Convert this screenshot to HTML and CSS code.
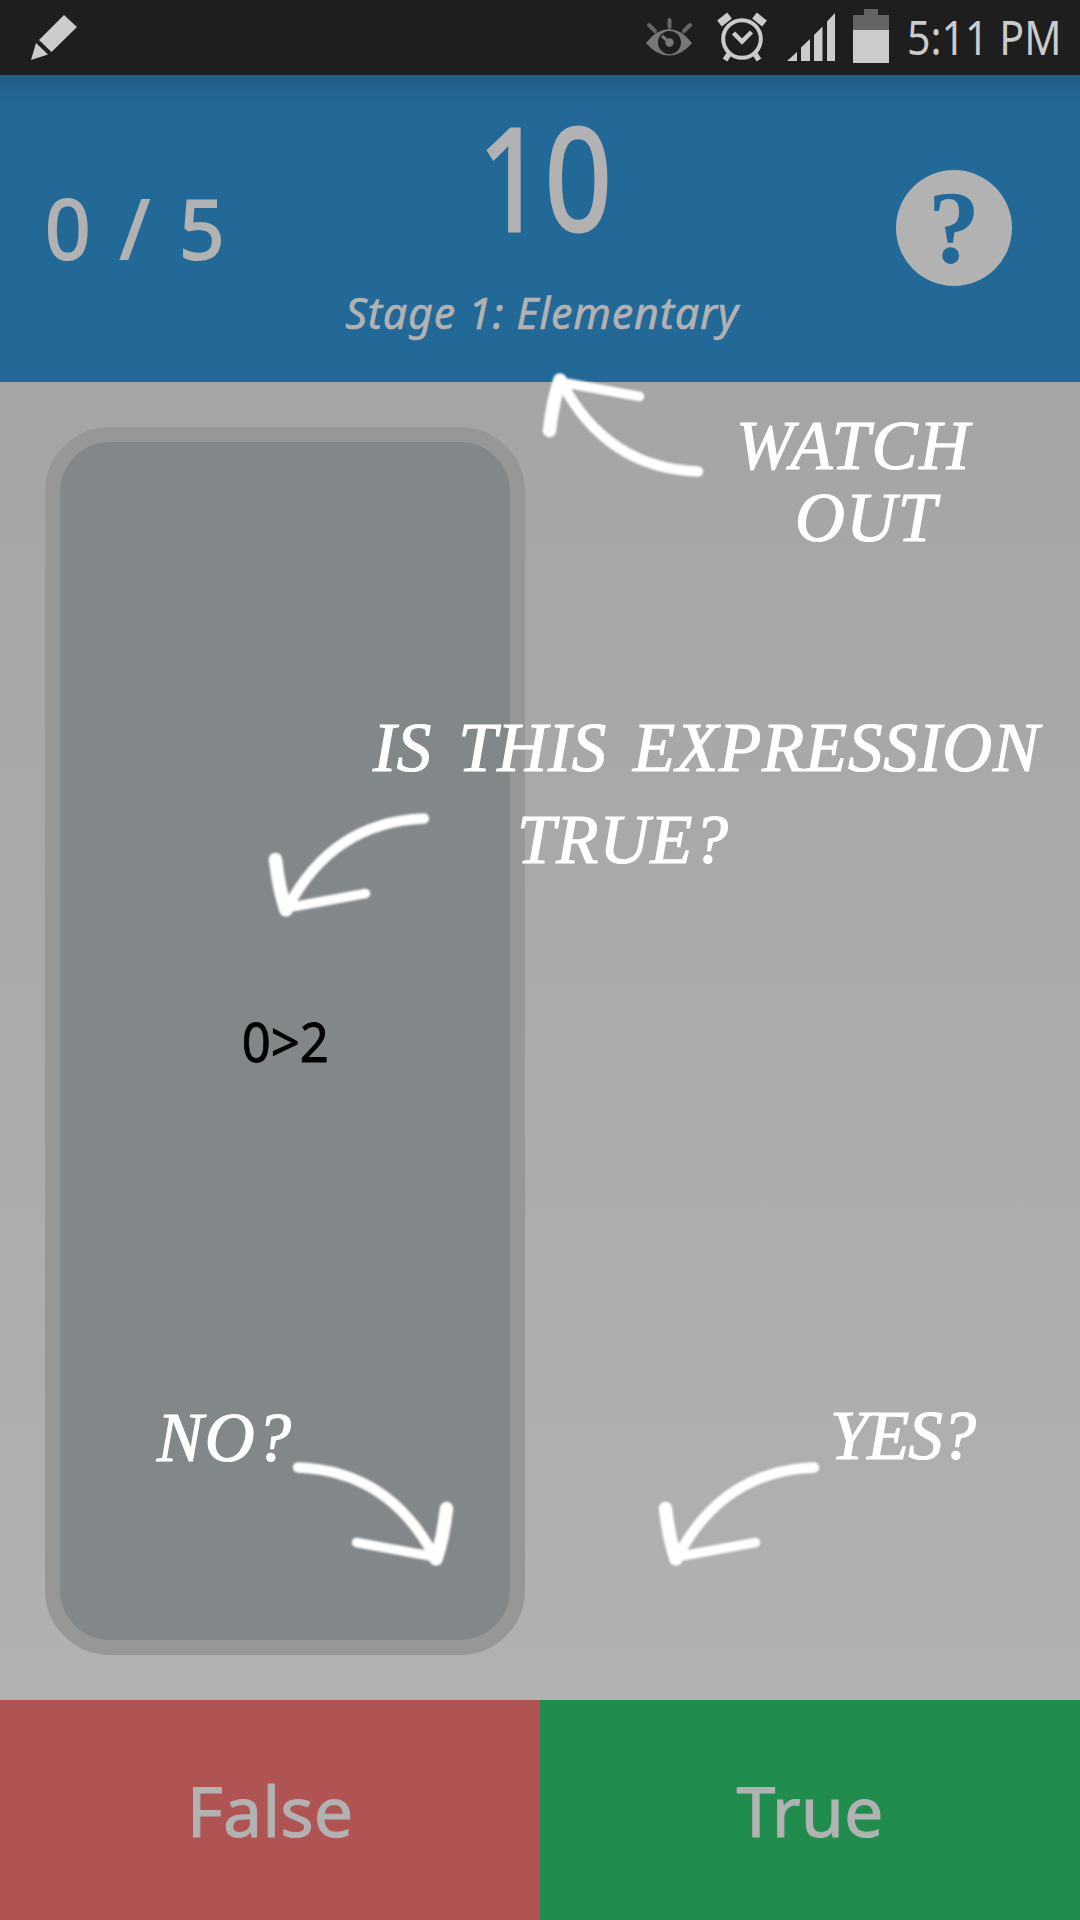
FILE: index.html
```html
<!DOCTYPE html>
<html lang="en">
<head>
<meta charset="utf-8">
<title>Stage 1: Elementary</title>
<link rel="stylesheet" href="styles.css">
</head>
<body>
<div class="screen">
  <div class="status">
    <svg class="pencil" width="48" height="48" viewBox="30 14 48 48"><path d="M64 15 77 27 51.5 52 39 40ZM36 43 48 54.5 31 60Z"/></svg>
    <div class="tray">
      <svg width="48" height="40" viewBox="645 18 48 40" class="eye">
        <path d="M646 43Q657 29 669 29T692 43Q682 55.500 669 55.500T646 43Z" fill="#777"/>
        <circle cx="669.500" cy="42.500" r="11.500" fill="#1e1e1e"/>
        <circle cx="669.500" cy="42.500" r="4.200" fill="#777"/>
        <path d="M669 42 662 36" stroke="#777" stroke-width="3"/>
        <path d="M669.500 20v7M649 25l6 6M690 25l-6 6" stroke="#666" stroke-width="4" stroke-linecap="round"/>
      </svg>
      <svg class="alarm" width="50" height="50" viewBox="717 12 50 50">
        <g fill="none" stroke="#cbcbcb">
          <circle cx="742" cy="39" r="18.800" stroke-width="4"/>
          <path d="M733.500 33l8.500 8.500 9.500-9.500" stroke-width="4.500"/>
          <path d="M719.500 23.500 729.500 15.500M764.500 23.500 754.500 15.500" stroke-width="7.500"/>
          <path d="M729 54l-4 6M755 54l4 6" stroke-width="5.500"/>
        </g>
      </svg>
      <svg class="signal" width="48" height="48" viewBox="787 13 48 48"><path fill="#cbcbcb" d="M787 61 797 52V61ZM801 61V47.500L810 39V61ZM814 61V35L822.500 26.500V61ZM827 61V21.500L835 13V61Z"/></svg>
      <svg class="battery" width="36" height="54" viewBox="0 0 36 54"><path fill="#646464" d="M11 0H25V6H36V21H0V6H11Z"/><path fill="#cbcbcb" d="M0 21H36V54H0Z"/></svg>
      <span class="clock">5:11 PM</span>
    </div>
  </div>
  <header class="header">
    <div class="score">0 / 5</div>
    <div class="middle">
      <div class="timer">10</div>
      <div class="stage">Stage 1: Elementary</div>
    </div>
    <div class="help"><span>?</span></div>
  </header>
  <main class="play">
    <div class="card"><span>0&gt;2</span></div>
  </main>
  <footer class="answers">
    <div class="answer false"><span>False</span></div>
    <div class="answer true"><span>True</span></div>
  </footer>
  <svg class="tutorial" width="1080" height="1920" viewBox="0 0 1080 1920">
    <defs>
      <g id="arrow" fill="none" stroke="#fff" stroke-linecap="round" stroke-linejoin="round">
        <path stroke-width="10.500" d="M288 907Q333 822 424 818.500"/>
        <path stroke-width="9.500" d="M286 908 365.500 893.500"/>
        <path stroke-width="13.500" d="M275.500 859.500Q279 890 286 910"/>
      </g>
    </defs>
    <g class="arrows">
      <use href="#arrow" transform="matrix(1 0 0 -1 274 1290)"/>
      <use href="#arrow"/>
      <use href="#arrow" transform="matrix(-1 0 0 1 722 649)"/>
      <use href="#arrow" transform="translate(390 649)"/>
    </g>
    <g class="hints">
      <text x="736" y="469" textLength="233">WATCH</text>
      <text x="795" y="541" textLength="141">OUT</text>
      <text x="373" y="771" textLength="666">IS THIS EXPRESSION</text>
      <text x="517" y="863" textLength="211">TRUE?</text>
      <text x="157" y="1461" textLength="134">NO?</text>
      <text x="830" y="1459" textLength="146">YES?</text>
    </g>
  </svg>
</div>
</body>
</html>
```
FILE: styles.css
```css
* { box-sizing: border-box; }
body { margin: 0; }
.screen {
  position: relative;
  width: 1080px;
  height: 1920px;
  display: flex;
  flex-direction: column;
  overflow: hidden;
  font-family: "Noto Sans", sans-serif;
  color: #b2b2b2;
  white-space: nowrap;
}
.status {
  height: 75px;
  flex: none;
  display: flex;
  justify-content: space-between;
  background: #1e1e1e;
  padding-left: 30px;
}
.pencil { margin-top: 14px; fill: #cbcbcb; }
.tray { display: flex; align-items: flex-start; width: 435px; }
.tray > * { flex: none; }
.eye { margin-top: 18px; filter: blur(0.6px); }
.alarm { margin: 12px 0 0 24px; }
.signal { margin: 13px 0 0 20px; }
.battery { margin: 9px 0 0 18px; }
.clock {
  margin: 3px 0 0 16px;
  color: #cbcbcb;
  font-size: 47px;
  line-height: 68px;
  transform: translateX(2px) scaleX(0.875);
  transform-origin: left;
}
.header {
  height: 307px;
  flex: none;
  display: grid;
  grid-template-columns: 345px 400px 335px;
  background: linear-gradient(#1f5c85, #226490 14px, #236998 36px);
}
.score {
  padding: 97px 0 0 45px;
  font-size: 83px;
  line-height: 110px;
  word-spacing: 9px;
  transform: scaleX(0.96);
  transform-origin: 48px 0;
  -webkit-text-stroke: 2px #b2b2b2;
}
.middle {
  display: flex;
  flex-direction: column;
  align-items: center;
}
.timer {
  padding-top: 28px;
  height: 208px;
  font-size: 143px;
  line-height: 146px;
  transform: scaleX(0.82);
  -webkit-text-stroke: 3px #b2b2b2;
}
.stage {
  font-size: 43px;
  line-height: 60px;
  letter-spacing: 0.8px;
  font-style: italic;
  -webkit-text-stroke: 0.6px #b2b2b2;
  transform: translateX(-3px);
}
.help {
  width: 116px;
  height: 116px;
  margin: 95px 0 0 151px;
  border-radius: 50%;
  background: #b2b2b2;
  color: #236998;
  text-align: center;
  font: bold 104px/116px "Liberation Serif", serif;
}
.play {
  flex: 1;
  padding: 45px;
  background: linear-gradient(#a5a5a5, #b1b1b1);
}
.card {
  width: 480px;
  height: 1228px;
  border: 15px solid #969897;
  border-radius: 65px;
  background: #82888a;
  display: flex;
  align-items: center;
  justify-content: center;
  color: #000;
  font-size: 54px;
}
.card span { transform: scaleX(0.94); -webkit-text-stroke: 0.8px #000; }
.answers { height: 220px; display: flex; flex: none; }
.answer {
  flex: 1;
  display: flex;
  align-items: center;
  justify-content: center;
  font-size: 70px;
  -webkit-text-stroke: 1px #b2b2b2;
}
.false { background: #b05353; }
.true { background: #208c4d; }
.tutorial { position: absolute; inset: 0; }
.arrows { filter: blur(0.8px); }
.hints {
  fill: #fff;
  stroke: #fff;
  stroke-width: 1.2px;
  word-spacing: 8px;
  font: italic 69px "Liberation Serif", serif;
}
```
